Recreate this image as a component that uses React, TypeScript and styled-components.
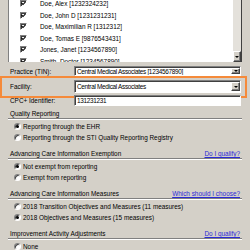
import styled, { createGlobalStyle } from "styled-components";

const GlobalStyle = createGlobalStyle`
  html, body {
    margin: 0;
    padding: 0;
    background: #d4d0c8;
  }
  body {
    font-family: "Liberation Sans", Arial, sans-serif;
    font-size: 6.4px;
    color: #000;
  }
`;

const Page = styled.div`
  width: 250px;
  height: 250px;
  overflow: hidden;
  box-sizing: border-box;
  padding: 0 8px;
  display: flex;
  flex-direction: column;
`;

const ListBox = styled.div`
  height: 62px;
  flex: none;
  display: flex;
  box-sizing: border-box;
  border-left: 1px solid #808080;
  background: #fff;
  overflow: hidden;
`;

const ListItems = styled.div`
  flex: 1;
  margin-top: -2px;
`;

const ListRow = styled.div`
  height: 11.5px;
  display: flex;
  align-items: center;
  padding-left: 11px;
`;

const CheckBox = styled.span`
  width: 7px;
  height: 7px;
  box-sizing: border-box;
  border: 1px solid;
  border-color: #808080 #fff #fff #808080;
  box-shadow: inset 1px 1px #404040;
  background: #fff;
  display: flex;
  align-items: center;
  justify-content: center;
  margin-right: 13px;
`;

const ScrollBar = styled.div`
  width: 8px;
  display: flex;
  flex-direction: column;
  justify-content: flex-end;
  background: #e4e1db;
  border-right: 1px solid #404040;
`;

const ArrowButton = styled.div<{ $h: number }>`
  height: ${(p) => p.$h}px;
  width: 100%;
  flex: none;
  box-sizing: border-box;
  background: #d4d0c8;
  border: 1px solid;
  border-color: #fff #404040 #404040 #fff;
  box-shadow: inset -1px -1px #808080;
  display: flex;
  align-items: center;
  justify-content: center;
  &::after {
    content: "";
    border-left: 2px solid transparent;
    border-right: 2px solid transparent;
    border-top: 2px solid #000;
  }
`;

const FieldRow = styled.div<{ $h: number; $mt: number }>`
  height: ${(p) => p.$h}px;
  margin-top: ${(p) => p.$mt}px;
  flex: none;
  display: flex;
  align-items: center;
  position: relative;
`;

const Highlight = styled.div`
  position: absolute;
  top: -4px;
  bottom: -5px;
  left: -8px;
  right: -5px;
  border: 2px solid #f58a3a;
  pointer-events: none;
`;

const FieldLabel = styled.span`
  width: 64px;
  padding-left: 2px;
  flex: none;
`;

const Field = styled.div`
  flex: 1;
  align-self: stretch;
  margin-right: 1px;
  box-sizing: border-box;
  background: #fff;
  border: 1px solid;
  border-color: #808080 #fff #fff #808080;
  box-shadow: inset 1px 1px #404040;
  display: flex;
  align-items: center;
  padding-left: 2px;
  white-space: nowrap;
  overflow: hidden;
  letter-spacing: -0.3px;
`;

const FieldText = styled.span`
  flex: 1;
`;

const DropButton = styled(ArrowButton)`
  width: 9px;
  height: auto;
  align-self: stretch;
  margin: 1px 0;
`;

const Section = styled.div<{ $mt: number }>`
  margin-top: ${(p) => p.$mt}px;
  flex: none;
`;

const SectionHead = styled.div`
  height: 9px;
  line-height: 9px;
  display: flex;
  justify-content: space-between;
  padding: 0 2px;
`;

const Link = styled.span`
  color: #2a2ad8;
  text-decoration: underline;
`;

const Rule = styled.div`
  border-top: 1px solid #808080;
  border-bottom: 1px solid #fff;
  margin-bottom: 1px;
`;

const RadioRow = styled.div`
  height: 11px;
  display: flex;
  align-items: center;
  padding-left: 6px;
  white-space: nowrap;
`;

const Radio = styled.span<{ $on?: boolean }>`
  width: 7px;
  height: 7px;
  box-sizing: border-box;
  border-radius: 50%;
  border: 1px solid;
  border-color: #808080 #fff #fff #808080;
  box-shadow: inset 1px 1px #404040;
  background: #fff;
  margin-right: 2px;
  display: flex;
  align-items: center;
  justify-content: center;
  &::after {
    content: "";
    width: 3px;
    height: 3px;
    border-radius: 50%;
    background: ${(p) => (p.$on ? "#000" : "transparent")};
  }
`;

const providers = [
  "Doe, Alex [1232324232]",
  "Doe, John D [1231231231]",
  "Doe, Maximilian R [1312312]",
  "Doe, Tomas E [9876543431]",
  "Jones, Janet [1234567890]",
  "Smith, Doctor [1234567890]",
];

const sections = [
  {
    title: "Quality Reporting",
    options: [
      { text: "Reporting through the EHR", on: true },
      { text: "Reporting through the STI Quality Reporting Registry" },
    ],
  },
  {
    title: "Advancing Care Information Exemption",
    link: "Do I qualify?",
    options: [
      { text: "Not exempt from reporting", on: true },
      { text: "Exempt from reporting" },
    ],
  },
  {
    title: "Advancing Care Information Measures",
    link: "Which should I choose?",
    options: [
      { text: "2018 Transition Objectives and Measures (11 measures)" },
      { text: "2018 Objectives and Measures (15 measures)", on: true },
    ],
  },
  {
    title: "Improvement Activity Adjustments",
    link: "Do I qualify?",
    options: [{ text: "None" }],
  },
];

const Check = () => (
  <svg width="5" height="5" viewBox="0 0 5 5">
    <path d="M0.5 2 L2 3.5 L4.5 0.8" stroke="#000" strokeWidth="1.1" fill="none" />
  </svg>
);

export default function App() {
  return (
    <>
      <GlobalStyle />
      <Page>
        <ListBox>
          <ListItems>
            {providers.map((p) => (
              <ListRow key={p}>
                <CheckBox>
                  <Check />
                </CheckBox>
                {p}
              </ListRow>
            ))}
          </ListItems>
          <ScrollBar>
            <ArrowButton $h={11} />
          </ScrollBar>
        </ListBox>

        <FieldRow $h={10} $mt={4}>
          <FieldLabel>Practice (TIN):</FieldLabel>
          <Field>
            <FieldText>Central Medical Associates [1234567890]</FieldText>
            <DropButton $h={8} />
          </Field>
        </FieldRow>
        <FieldRow $h={13} $mt={4}>
          <FieldLabel>Facility:</FieldLabel>
          <Field>
            <FieldText>Central Medical Associates</FieldText>
            <DropButton $h={11} />
          </Field>
          <Highlight />
        </FieldRow>
        <FieldRow $h={11} $mt={2}>
          <FieldLabel>CPC+ Identifier:</FieldLabel>
          <Field>
            <FieldText>131231231</FieldText>
          </Field>
        </FieldRow>

        {sections.map((s, i) => (
          <Section key={s.title} $mt={i === 0 ? 3 : 6}>
            <SectionHead>
              <span>{s.title}</span>
              {s.link && <Link>{s.link}</Link>}
            </SectionHead>
            <Rule />
            {s.options.map((o) => (
              <RadioRow key={o.text}>
                <Radio $on={o.on} />
                {o.text}
              </RadioRow>
            ))}
          </Section>
        ))}
      </Page>
    </>
  );
}
